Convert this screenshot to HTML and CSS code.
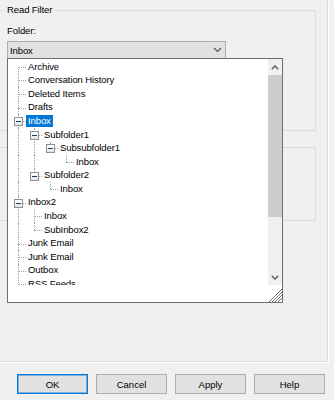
FILE: index.html
```html
<!DOCTYPE html>
<html lang="en">
<head>
<meta charset="utf-8"/>
<meta content="width=device-width, initial-scale=1.0" name="viewport"/>
<title>Read Filter</title>
<link rel="stylesheet" href="styles.css">
</head>
<body>
<div class="dialog">
  <div class="page">
    <div class="group">
      <span class="legend">Read Filter</span>
      <div class="field-label">Folder:</div>
      <div class="combo">
        <span>Inbox</span>
        <svg width="9" height="6" viewBox="0 0 9 6"><path d="M1 1 L4.5 4.5 L8 1" fill="none" stroke="#505050" stroke-width="1.2"/></svg>
      </div>
    </div>
    <div class="group group-second"></div>
  </div>

  <div class="buttons">
    <button class="btn btn-default">OK</button>
    <button class="btn">Cancel</button>
    <button class="btn">Apply</button>
    <button class="btn">Help</button>
  </div>

  <!-- folder picker popup -->
  <div class="dropdown">
    <div class="list-body">
      <div class="tree">
        <div class="row"><span class="cell first"></span><span class="label">Archive</span></div>
        <div class="row"><span class="cell tee"></span><span class="label">Conversation History</span></div>
        <div class="row"><span class="cell tee"></span><span class="label">Deleted Items</span></div>
        <div class="row"><span class="cell tee"></span><span class="label">Drafts</span></div>
        <div class="row"><span class="cell tee"><i class="box"></i></span><span class="label selected">Inbox</span></div>
        <div class="row"><span class="cell pipe"></span><span class="cell tee"><i class="box"></i></span><span class="label">Subfolder1</span></div>
        <div class="row"><span class="cell pipe"></span><span class="cell pipe"></span><span class="cell ell"><i class="box"></i></span><span class="label">Subsubfolder1</span></div>
        <div class="row"><span class="cell pipe"></span><span class="cell pipe"></span><span class="cell"></span><span class="cell ell"></span><span class="label">Inbox</span></div>
        <div class="row"><span class="cell pipe"></span><span class="cell ell"><i class="box"></i></span><span class="label">Subfolder2</span></div>
        <div class="row"><span class="cell pipe"></span><span class="cell"></span><span class="cell ell"></span><span class="label">Inbox</span></div>
        <div class="row"><span class="cell tee"><i class="box"></i></span><span class="label">Inbox2</span></div>
        <div class="row"><span class="cell pipe"></span><span class="cell tee"></span><span class="label">Inbox</span></div>
        <div class="row"><span class="cell pipe"></span><span class="cell ell"></span><span class="label">SubInbox2</span></div>
        <div class="row"><span class="cell tee"></span><span class="label">Junk Email</span></div>
        <div class="row"><span class="cell tee"></span><span class="label">Junk Email</span></div>
        <div class="row"><span class="cell tee"></span><span class="label">Outbox</span></div>
        <div class="row"><span class="cell tee"></span><span class="label">RSS Feeds</span></div>
      </div>
      <div class="scrollbar">
        <div class="arrow">
          <svg width="8" height="5" viewBox="0 0 8 5"><path d="M0.8 4.2 L4 1 L7.2 4.2" fill="none" stroke="#606060" stroke-width="1.5"/></svg>
        </div>
        <div class="thumb"></div>
        <div class="track"></div>
        <div class="arrow">
          <svg width="8" height="5" viewBox="0 0 8 5"><path d="M0.8 0.8 L4 4 L7.2 0.8" fill="none" stroke="#606060" stroke-width="1.5"/></svg>
        </div>
      </div>
    </div>
    <div class="list-foot">
      <svg class="grip" width="14" height="17" viewBox="0 0 14 17">
        <g stroke="#707070" stroke-width="1">
          <line x1="1" y1="17" x2="14" y2="4"/>
          <line x1="4" y1="17" x2="14" y2="7"/>
          <line x1="7" y1="17" x2="14" y2="10"/>
          <line x1="10" y1="17" x2="14" y2="13"/>
        </g>
      </svg>
    </div>
  </div>
</div>
</body>
</html>
```

FILE: styles.css
```css
* {
  box-sizing: border-box;
}

body {
  margin: 0;
  background: #f0f0f0;
  font-family: "Liberation Sans", Arial, sans-serif;
  font-size: 9.5px;
  letter-spacing: -0.1px;
  color: #000;
}

.dialog {
  position: relative;
  width: 334px;
  height: 400px;
  overflow: hidden;
}

.page {
  width: 328px;
  height: 362px;
  padding-top: 10px;
  border-right: 1px solid #d9d9d9;
  border-bottom: 1px solid #d9d9d9;
  box-shadow: 1px 1px 0 #fff;
}

.group {
  position: relative;
  margin-left: -10px;
  width: 326px;
  height: 121px;
  border: 1px solid #dcdcdc;
  padding: 14px 0 0 16px;
}

.group-second {
  margin-top: 16px;
  height: 74px;
}

.legend {
  position: absolute;
  top: -7px;
  left: 14px;
  padding: 0 2px;
  line-height: 12px;
  background: #f0f0f0;
}

.field-label {
  line-height: 12px;
  margin-bottom: 4px;
}

.combo {
  width: 219px;
  height: 18px;
  border: 1px solid #adadad;
  background: #e1e1e1;
  display: flex;
  align-items: center;
  justify-content: space-between;
  padding: 0 3px 0 2px;
}

.buttons {
  display: flex;
  gap: 8px;
  margin-top: 12px;
  padding-left: 17px;
}

.btn {
  width: 71px;
  height: 20px;
  border: 1px solid #adadad;
  background: #e1e1e1;
  font-family: inherit;
  font-size: 9.5px;
  color: #000;
  padding: 0;
}

.btn-default {
  border-color: #0078d7;
  box-shadow: inset 0 0 0 1px rgba(0, 120, 215, 0.45);
}

/* popup list */
.dropdown {
  position: absolute;
  left: 7px;
  top: 58px;
  width: 276px;
  height: 245px;
  border: 1px solid #6e6e6e;
  background: #fff;
  display: flex;
  flex-direction: column;
}

.list-body {
  height: 226px;
  display: flex;
}

.list-foot {
  flex: 1;
  display: flex;
  justify-content: flex-end;
}

.tree {
  flex: 1;
  padding: 1px 0 0 2px;
  overflow: hidden;
}

.row {
  display: flex;
  height: 13.6px;
}

.cell {
  position: relative;
  flex: none;
  width: 16px;
}

.cell::before,
.cell::after {
  content: "";
  position: absolute;
}

.pipe::before,
.tee::before {
  left: 8px;
  top: 0;
  bottom: 0;
  border-left: 1px dotted #a0a0a0;
}

.ell::before {
  left: 8px;
  top: 0;
  height: 50%;
  border-left: 1px dotted #a0a0a0;
}

.first::before {
  left: 8px;
  top: 50%;
  bottom: 0;
  border-left: 1px dotted #a0a0a0;
}

.tee::after,
.ell::after,
.first::after {
  left: 8px;
  width: 8px;
  top: 50%;
  border-top: 1px dotted #a0a0a0;
}

.box {
  position: absolute;
  z-index: 1;
  left: 4px;
  top: calc(50% - 4px);
  width: 9px;
  height: 9px;
  border: 1px solid #919191;
  background: linear-gradient(#fff, #e4e4e4);
}

.box::after {
  content: "";
  position: absolute;
  left: 1px;
  top: 3px;
  width: 5px;
  height: 1px;
  background: #1c3e66;
}

.label {
  align-self: center;
  padding: 0 2px;
  line-height: 12.5px;
  white-space: nowrap;
}

.label.selected {
  background: #0078d7;
  color: #fff;
}

.scrollbar {
  width: 14px;
  display: flex;
  flex-direction: column;
}

.arrow {
  height: 16px;
  background: #f0f0f0;
  display: flex;
  align-items: center;
  justify-content: center;
}

.thumb {
  height: 142px;
  background: #cdcdcd;
}

.track {
  flex: 1;
  background: #f0f0f0;
}
```
